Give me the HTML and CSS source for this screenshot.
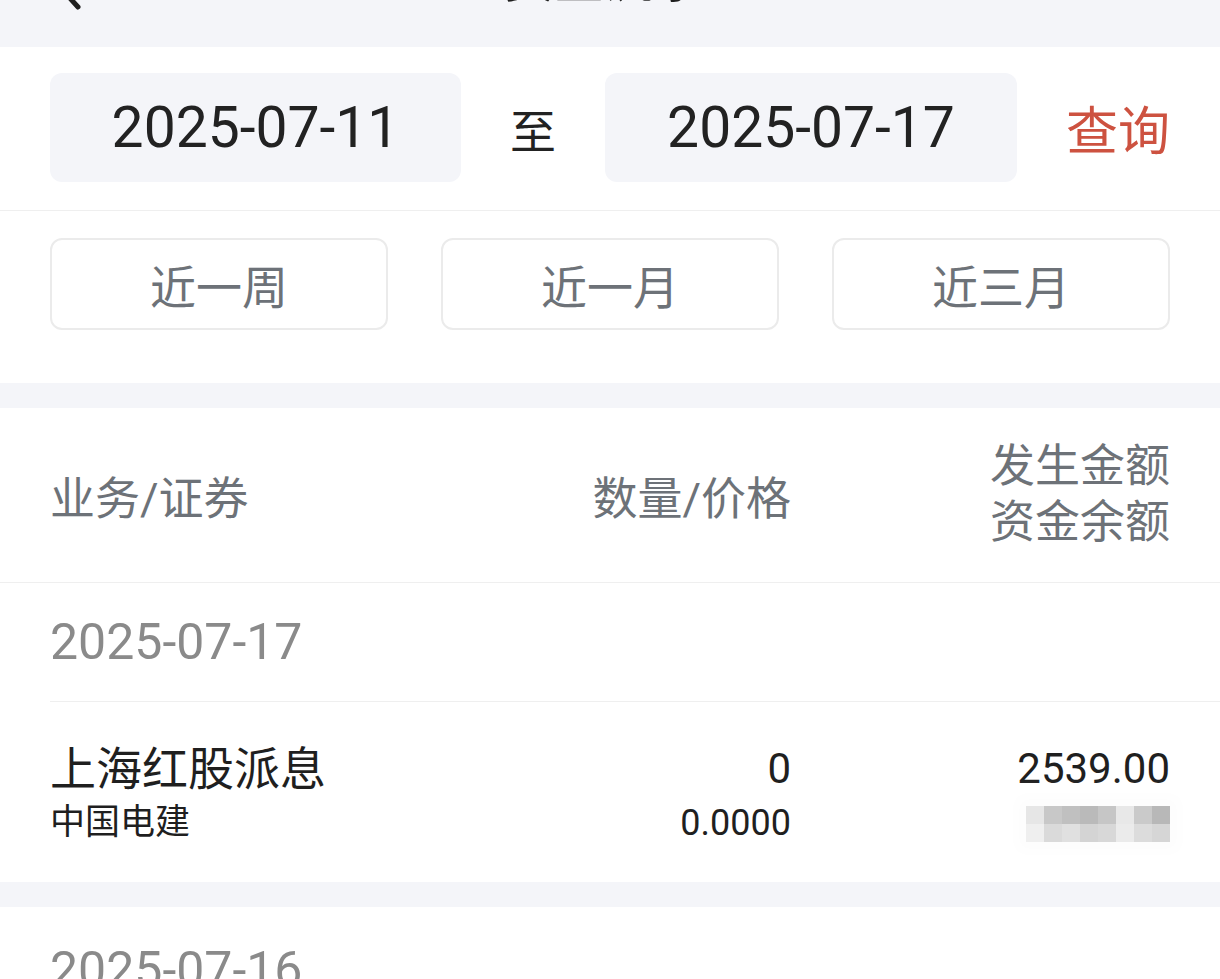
FILE: index.html
```html
<!DOCTYPE html>
<html lang="zh-CN">
<head>
<meta charset="UTF-8">
<title>资金流水</title>
<link rel="stylesheet" href="styles.css">
</head>
<body>
<header class="topbar">
    <div class="nav">
        <svg class="back" width="40" height="60" viewBox="0 0 40 60">
            <polyline points="30,8 10,30 30,52" fill="none" stroke="#1f1f1f" stroke-width="5" stroke-linecap="round" stroke-linejoin="round"/>
        </svg>
        <div class="title">资金流水</div>
    </div>
</header>

<section class="filter">
    <div class="date-row">
        <div class="date-box">2025-07-11</div>
        <span class="to">至</span>
        <div class="date-box">2025-07-17</div>
        <button class="query">查询</button>
    </div>
    <div class="quick-row">
        <button class="quick">近一周</button>
        <button class="quick">近一月</button>
        <button class="quick">近三月</button>
    </div>
</section>

<div class="gap"></div>

<section class="list">
    <div class="list-head">
        <div class="col-name">业务/证券</div>
        <div class="col-qty">数量/价格</div>
        <div class="col-amt">发生金额<br>资金余额</div>
    </div>
    <div class="group-date">2025-07-17</div>
    <div class="record">
        <div class="col-name">
            <div class="main">上海红股派息</div>
            <div class="sub">中国电建</div>
        </div>
        <div class="col-qty">
            <div class="main">0</div>
            <div class="sub">0.0000</div>
        </div>
        <div class="col-amt">
            <div class="main">2539.00</div>
            <div class="sub">
                <div class="mosaic">
                    <i></i><i></i><i></i><i></i><i></i><i></i><i></i><i></i>
                    <i></i><i></i><i></i><i></i><i></i><i></i><i></i><i></i>
                </div>
            </div>
        </div>
    </div>
</section>

<div class="gap"></div>

<section class="list">
    <div class="group-date next">2025-07-16</div>
</section>
</body>
</html>
```

FILE: styles.css
```css
body {
    margin: 0;
    background: #fff;
    font-family: Roboto, "Noto Sans CJK SC", sans-serif;
    color: #222;
    overflow: hidden;
}
button {
    font-family: inherit;
    background: none;
    border: none;
    padding: 0;
    cursor: pointer;
}

.topbar {
    height: 47px;
    background: #f4f5f9;
    overflow: hidden;
}
.nav {
    height: 80px;
    margin-top: -65px;
    display: flex;
    align-items: center;
    justify-content: center;
    position: relative;
}
.back {
    position: absolute;
    left: 48px;
    top: 20px;
}
.title {
    font-size: 50px;
    color: #1f1f1f;
    font-weight: 500;
    margin-left: -12px;
}

.date-row {
    display: flex;
    align-items: center;
    padding: 26px 50px 28px;
    border-bottom: 1px solid #efefef;
}
.date-box {
    width: 411px;
    height: 109px;
    background: #f4f5f9;
    border-radius: 12px;
    display: flex;
    align-items: center;
    justify-content: center;
    font-size: 57px;
    color: #222;
}
.to {
    width: 144px;
    text-align: center;
    font-size: 46px;
    color: #222;
}
.date-row .date-box:nth-of-type(2) {
    width: 412px;
}
.query {
    margin-left: auto;
    font-size: 52px;
    color: #cd5240;
}

.quick-row {
    display: flex;
    justify-content: space-between;
    padding: 27px 50px 53px;
}
.quick {
    width: 338px;
    height: 92px;
    border: 2px solid #ebebeb;
    border-radius: 12px;
    font-size: 46px;
    color: #6d7278;
    box-sizing: border-box;
}

.gap {
    height: 25px;
    background: #f4f5f9;
}

.list-head {
    display: flex;
    align-items: center;
    height: 174px;
    padding: 0 50px;
    border-bottom: 1px solid #efefef;
    font-size: 45px;
    color: #6d7278;
}
.col-name {
    flex: 1;
}
.col-qty {
    width: 300px;
    text-align: right;
}
.col-amt {
    width: 379px;
    text-align: right;
    line-height: 56px;
}

.group-date {
    margin-left: 50px;
    height: 118px;
    line-height: 118px;
    font-size: 50px;
    color: #8a8a8a;
    border-bottom: 1px solid #efefef;
}
.group-date.next {
    height: 72px;
    line-height: 126px;
    border-bottom: none;
    overflow: hidden;
}

.record {
    display: flex;
    height: 180px;
    padding: 6px 50px 0;
    box-sizing: border-box;
    align-items: center;
}
.record .col-amt {
    line-height: normal;
}
.record .main {
    font-size: 44px;
    line-height: 56px;
    color: #1f1f1f;
}
.record .sub {
    font-size: 36px;
    line-height: 52px;
    color: #1f1f1f;
    height: 52px;
}
.record .col-name .main {
    font-size: 46px;
}
.record .col-name .sub {
    font-size: 35px;
}
.record .col-qty .main {
    font-size: 42px;
}
.record .col-amt .main {
    font-size: 42px;
}

.mosaic {
    display: inline-grid;
    vertical-align: top;
    grid-template-columns: repeat(8, 18px);
    grid-auto-rows: 18px;
    margin-top: 9px;
    box-shadow: 0 0 14px 10px #fdfdfd;
}
.mosaic i:nth-child(1) { background: #e6e6e6; }
.mosaic i:nth-child(2) { background: #c8c8c8; }
.mosaic i:nth-child(3) { background: #c0c0c0; }
.mosaic i:nth-child(4) { background: #bababa; }
.mosaic i:nth-child(5) { background: #c6c6c6; }
.mosaic i:nth-child(6) { background: #e8e8e8; }
.mosaic i:nth-child(7) { background: #cacaca; }
.mosaic i:nth-child(8) { background: #b8b8b8; }
.mosaic i:nth-child(9) { background: #efefef; }
.mosaic i:nth-child(10) { background: #dadada; }
.mosaic i:nth-child(11) { background: #e0e0e0; }
.mosaic i:nth-child(12) { background: #d4d4d4; }
.mosaic i:nth-child(13) { background: #d8d8d8; }
.mosaic i:nth-child(14) { background: #ebebeb; }
.mosaic i:nth-child(15) { background: #dcdcdc; }
.mosaic i:nth-child(16) { background: #d6d6d6; }
```
